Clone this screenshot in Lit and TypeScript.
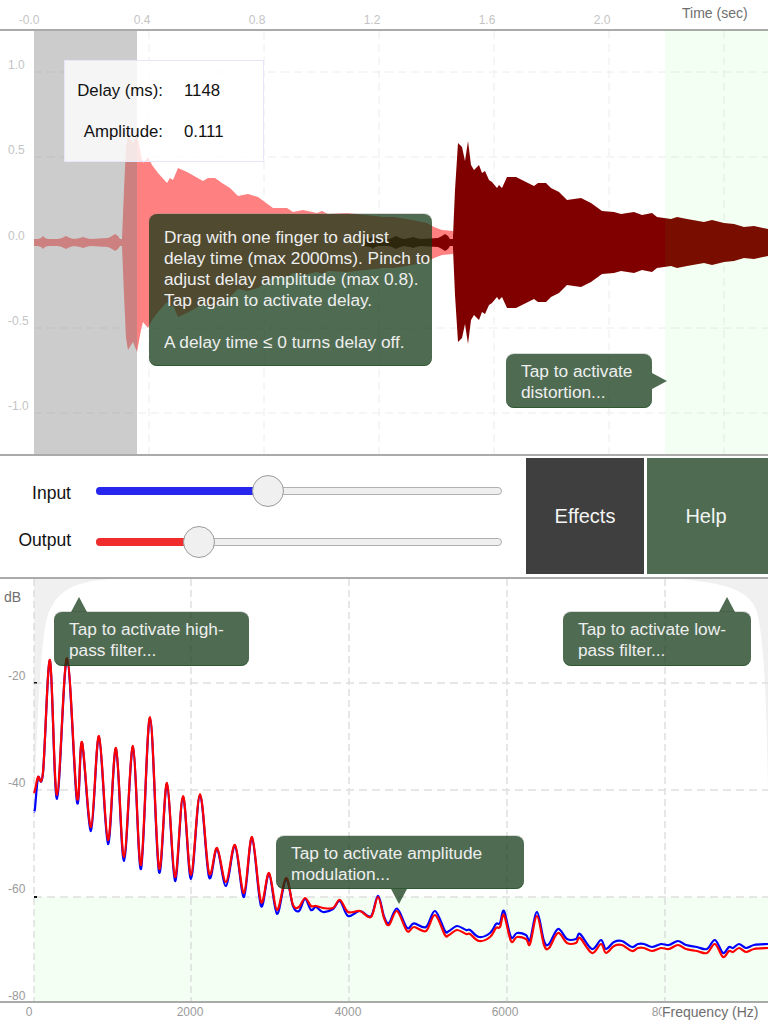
import { LitElement, html, css, svg } from "lit";
import { customElement } from "lit/decorators.js";

type P = [number, number];
const ZERO = 242.5;

const darkTop: P[] = [[453,236],[455,190],[458,143],[462,147],[465,161],[468,141],[471,165],[474,170],[479,165],[482,173],[485,171],[489,180],[492,182],[497,188],[499,185],[502,188],[507,177],[516,177],[524,181],[534,186],[538,183],[546,183],[551,188],[559,192],[567,200],[581,198],[591,203],[602,211],[614,212],[621,214],[634,212],[642,215],[652,213],[657,217],[671,219],[677,217],[687,219],[704,222],[712,220],[724,223],[734,224],[744,227],[754,226],[768,229]];
const pinkTop: P[] = [[34,239],[38,239],[41,238],[43,236],[45,238],[48,239],[58,239],[62,238],[66,236],[70,238],[74,239],[80,238],[83,237],[86,238],[90,239],[108,238],[112,236],[115,234],[118,236],[120,239],[122,239],[124,190],[126,147],[128,135],[131,140],[133,143],[137,133],[141,155],[143,163],[148,157],[152,165],[158,173],[167,183],[170,178],[173,180],[178,168],[187,172],[203,181],[208,178],[215,178],[222,183],[230,188],[238,196],[248,194],[258,197],[273,208],[287,208],[293,212],[303,210],[317,213],[322,211],[328,214],[347,213],[384,217],[394,217],[412,220],[427,223],[434,227],[442,230],[453,231],[453,242]];
const darkSmallTop: P[] = [[364,239],[371,238],[373,236],[375,238],[378,239],[388,239],[392,238],[396,236],[400,238],[404,239],[410,238],[413,237],[416,238],[420,239],[438,238],[442,236],[445,234],[448,236],[450,239],[453,239]];

const red: P[] = [[34,793],[35,790],[38,777],[43,772],[50,660],[57,795],[67,658],[77,798],[82,742],[91,827],[99,736],[108,840],[116,748],[124,857],[133,746],[141,865],[150,717],[159,868],[167,783],[175,877],[183,796],[191,875],[200,794],[209,873],[217,848],[226,882],[235,845],[244,893],[252,837],[261,902],[269,873],[277,910],[286,878],[293,905],[299,907],[305,898],[311,906],[316,906],[323,908],[333,908],[340,900],[348,912],[360,911],[371,917],[378,897],[384,918],[389,925],[397,911],[407,931],[414,927],[426,931],[435,915],[445,935],[449,935],[457,930],[466,934],[470,934],[479,941],[490,937],[496,928],[500,927],[504,915],[511,941],[517,937],[526,939],[530,944],[537,916],[544,945],[549,948],[558,933],[567,943],[576,943],[580,938],[592,953],[601,944],[606,953],[614,946],[622,945],[632,951],[638,948],[644,948],[652,951],[661,948],[669,949],[678,945],[686,949],[697,951],[707,953],[715,944],[723,957],[729,951],[733,952],[739,948],[746,952],[754,949],[768,948]];

const blue: P[] = red.map(([x, y], i) => {
  if (x < 360) {
    const prev = red[i - 1]?.[1] ?? y;
    const next = red[i + 1]?.[1] ?? y;
    const isMin = y > prev && y >= next;
    return [x, y + (isMin ? 4 : x < 36 ? 18 : 1)] as P;
  }
  return [x, y - Math.min(4, ((x - 360) / 60) * 4)] as P;
});

function mirrored(top: P[]): string {
  const bottom = [...top].reverse().map(([x, y]) => `${x},${2 * ZERO - y}`);
  return top.map(([x, y]) => `${x},${y}`).concat(bottom).join(" ");
}

function smooth(p: P[]): string {
  let d = `M${p[0][0]},${p[0][1]}`;
  for (let i = 0; i < p.length - 1; i++) {
    const a = p[Math.max(0, i - 1)];
    const b = p[i];
    const c = p[i + 1];
    const e = p[Math.min(p.length - 1, i + 2)];
    const c1x = b[0] + (c[0] - a[0]) / 6;
    const c1y = b[1] + (c[1] - a[1]) / 6;
    const c2x = c[0] - (e[0] - b[0]) / 6;
    const c2y = c[1] - (e[1] - b[1]) / 6;
    d += ` C${c1x.toFixed(1)},${c1y.toFixed(1)} ${c2x.toFixed(1)},${c2y.toFixed(1)} ${c[0]},${c[1]}`;
  }
  return d;
}

@customElement("level-slider")
class LevelSlider extends LitElement {
  static properties = {
    label: { type: String },
    value: { type: Number },
    tone: { type: String },
  };
  label = "";
  value = 0;
  tone = "blue";
  static styles = css`
    :host { display: grid; grid-template-columns: 71px 406px; column-gap: 25px; align-items: center; height: 32px; }
    .name { font: 17.5px "Liberation Sans", Arial, sans-serif; color: #111; text-align: right; position: relative; }
    .name.blue { background: none; top: 2px; }
    .name.red { background: none; top: -2px; }
    .track { position: relative; height: 8px; box-sizing: border-box; border: 1px solid #b0b0b0; border-radius: 4px; background: #efefef; }
    .fill { position: absolute; left: -1px; top: -1px; bottom: -1px; border-radius: 4px 0 0 4px; }
    .fill.blue { background: #2626ee; }
    .fill.red { background: #f02c2c; }
    .thumb { position: absolute; top: 50%; width: 32px; height: 32px; margin: -16px 0 0 -16px; box-sizing: border-box; border: 1px solid #9c9c9c; border-radius: 50%; background: #f0f0f0; }
  `;
  render() {
    return html`
      <span class="name ${this.tone}">${this.label}</span>
      <div class="track">
        <div class="fill ${this.tone}" style="width:${this.value}px"></div>
        <div class="thumb" style="left:${this.value}px"></div>
      </div>
    `;
  }
}

@customElement("app-root")
class AppRoot extends LitElement {
  static styles = css`
    :host { display: block; width: 768px; height: 1024px; overflow: hidden; background: #fff; font-family: "Liberation Sans", Arial, sans-serif; }
    svg { display: block; }
    .axis-top { height: 29px; border-bottom: 2px solid #aaa; }
    .axis-top svg { width: 768px; height: 29px; }
    .tick { font-size: 12px; fill: #c4c4c4; }
    .title { font-size: 14px; fill: #6e6e6e; }
    .stick { font-size: 12px; fill: #9a9a9a; }
    .wave { position: relative; height: 423px; }
    .wave svg { width: 768px; height: 423px; }
    .controls { display: flex; justify-content: space-between; box-sizing: border-box; height: 125px; padding: 2px 0 3px; border-top: 2px solid #aaa; border-bottom: 2px solid #aaa; }
    .sliders { display: flex; flex-direction: column; gap: 19px; padding-top: 17px; }
    .buttons { display: flex; gap: 3px; }
    .btn { display: flex; align-items: center; justify-content: center; height: 116px; color: #f4f4f4; font-size: 20px; box-sizing: border-box; }
    .effects { width: 118px; background: #3f3f3f; }
    .help { width: 121px; background: #4f6c52; padding-right: 3px; }
    .spectrum { position: relative; height: 422px; border-bottom: 2px solid #aaa; }
    .spectrum svg { width: 768px; height: 422px; overflow: visible; }
    .axis-bottom { height: 21px; }
    .axis-bottom svg { width: 768px; height: 21px; }
    .info { position: absolute; left: 64px; top: 29px; width: 200px; height: 102px; box-sizing: border-box; border: 1px solid #e6e6fa; background: rgba(255, 255, 255, 0.8); display: grid; grid-template-columns: 98px auto; grid-auto-rows: 41px; column-gap: 21px; padding-top: 9px; align-items: center; font-size: 16.8px; color: #111; }
    .info .k { text-align: right; }
    .tip { position: absolute; box-sizing: border-box; border-radius: 8px; background: rgba(14, 54, 18, 0.73); box-shadow: inset 0 -1px 0 rgba(14, 70, 20, 0.5), 0 -1px 0 rgba(150, 150, 150, 0.35); color: #eeeeee; font-size: 17.3px; line-height: 21px; padding: 7px 0 0 15px; white-space: pre; }
    .tip::after { content: ""; position: absolute; background: rgba(14, 54, 18, 0.73); }
    .up::after { width: 16px; height: 15px; top: -15px; clip-path: polygon(50% 0, 100% 100%, 0 100%); }
    .down::after { width: 16px; height: 15px; bottom: -15px; clip-path: polygon(0 0, 100% 0, 50% 100%); }
    .right::after { width: 15px; height: 16px; right: -15px; top: 19px; clip-path: polygon(0 0, 100% 50%, 0 100%); }
    .delay { left: 149px; top: 183px; width: 283px; height: 152px; padding-top: 13px; }
    .dist { left: 506px; top: 323px; width: 146px; height: 54px; }
    .hp { left: 54px; top: 33px; width: 195px; height: 54px; }
    .hp::after { left: 17px; }
    .lp { left: 563px; top: 33px; width: 188px; height: 54px; }
    .lp::after { left: 156px; }
    .am { left: 276px; top: 257px; width: 248px; height: 53px; }
    .am::after { left: 115px; }
  `;

  private vGridWave() {
    return [149, 264, 379, 494, 609, 724].map(
      (x) => svg`<line x1=${x} x2=${x} y1="31" y2="454" stroke="#ececec" stroke-dasharray="8 5"/>`
    );
  }
  private hGridWave() {
    return [72, 157, 328, 413].map(
      (y) => svg`<line x1="34" x2="768" y1=${y} y2=${y} stroke="#ececec" stroke-dasharray="8 5"/>`
    );
  }

  render() {
    const topTicks: [string, number][] = [["-0.0", 29], ["0.4", 142], ["0.8", 257], ["1.2", 372], ["1.6", 487], ["2.0", 602]];
    const yTicks: [string, number][] = [["1.0", 69], ["0.5", 154], ["0.0", 240], ["-0.5", 325], ["-1.0", 410]];
    const dbTicks: [string, number][] = [["-20", 680], ["-40", 787], ["-60", 893], ["-80", 1000]];
    const fTicks: [string, number][] = [["0", 29], ["2000", 190], ["4000", 348], ["6000", 505], ["8000", 665]];
    return html`
      <div class="axis-top">
        <svg viewBox="0 0 768 29">
          ${topTicks.map(([t, x]) => svg`<text class="tick" x=${x} y="24" text-anchor="middle">${t}</text>`)}
          <text class="title" x="682" y="18">Time (sec)</text>
        </svg>
      </div>
      <div class="wave">
        <svg viewBox="0 31 768 423">
          ${this.vGridWave()}
          ${this.hGridWave()}
          <polygon points=${mirrored(pinkTop)} fill="#ff8080"/>
          <polygon points=${mirrored(darkSmallTop)} fill="#800000"/>
          <polygon points=${mirrored(darkTop)} fill="#800000"/>
          <rect x="34" y="31" width="103" height="423" fill="rgba(128,128,128,0.4)"/>
          <rect x="665" y="31" width="103" height="423" fill="rgba(0,255,0,0.05)"/>
          ${yTicks.map(([t, y]) => svg`<text class="tick" x="8" y=${y}>${t}</text>`)}
        </svg>
        <div class="info">
          <span class="k">Delay (ms):</span><span>1148</span>
          <span class="k">Amplitude:</span><span>0.111</span>
        </div>
        <div class="tip delay">Drag with one finger to adjust
delay time (max 2000ms). Pinch to
adjust delay amplitude (max 0.8).
Tap again to activate delay.

A delay time ≤ 0 turns delay off.</div>
        <div class="tip right dist">Tap to activate
distortion...</div>
      </div>
      <div class="controls">
        <div class="sliders">
          <level-slider label="Input" .value=${171} tone="blue"></level-slider>
          <level-slider label="Output" .value=${102} tone="red"></level-slider>
        </div>
        <div class="buttons">
          <div class="btn effects">Effects</div>
          <div class="btn help">Help</div>
        </div>
      </div>
      <div class="spectrum">
        <svg viewBox="0 579 768 422">
          <rect x="34" y="897" width="734" height="104" fill="rgba(0,255,0,0.05)"/>
          <path d="M34,579 L113,579 C72,581 55,592 47,618 C40,645 38,720 34,800 Z" fill="#f0f0f0"/>
          <path d="M680,579 L768,579 L768,800 C767,700 764,640 757,612 C750,590 725,583 680,579 Z" fill="#f0f0f0"/>
          ${[34, 191, 349, 507, 665].map((x) => svg`<line x1=${x} x2=${x} y1="579" y2="1001" stroke="#cfcfcf" stroke-dasharray="7 4"/>`)}
          ${[683, 790, 897].map((y) => svg`<line x1="34" x2="768" y1=${y} y2=${y} stroke="#e0e0e0" stroke-width="1.5" stroke-dasharray="8 5"/>`)}
          ${[683, 790].map((y) => svg`<rect x="34" y=${y - 1} width="3" height="1.5" fill="#111"/>`)}
          <rect x="34" y="896" width="3" height="2" fill="#111"/>
          <path d=${smooth(blue)} fill="none" stroke="#0000ff" stroke-width="2.2" stroke-linejoin="round"/>
          <path d=${smooth(red)} fill="none" stroke="#ff0000" stroke-width="2.2" stroke-linejoin="round"/>
          <text class="title" x="4" y="602">dB</text>
          ${dbTicks.map(([t, y]) => svg`<text class="stick" x="8" y=${y}>${t}</text>`)}
        </svg>
        <div class="tip up hp">Tap to activate high-
pass filter...</div>
        <div class="tip up lp">Tap to activate low-
pass filter...</div>
        <div class="tip down am">Tap to activate amplitude
modulation...</div>
      </div>
      <div class="axis-bottom">
        <svg viewBox="0 1003 768 21">
          ${fTicks.map(([t, x]) => svg`<text class="stick" x=${x} y="1016" text-anchor="middle">${t}</text>`)}
          <rect x="662" y="1003" width="106" height="21" fill="#fff"/>
          <text class="title" x="662" y="1017">Frequency (Hz)</text>
        </svg>
      </div>
    `;
  }
}
